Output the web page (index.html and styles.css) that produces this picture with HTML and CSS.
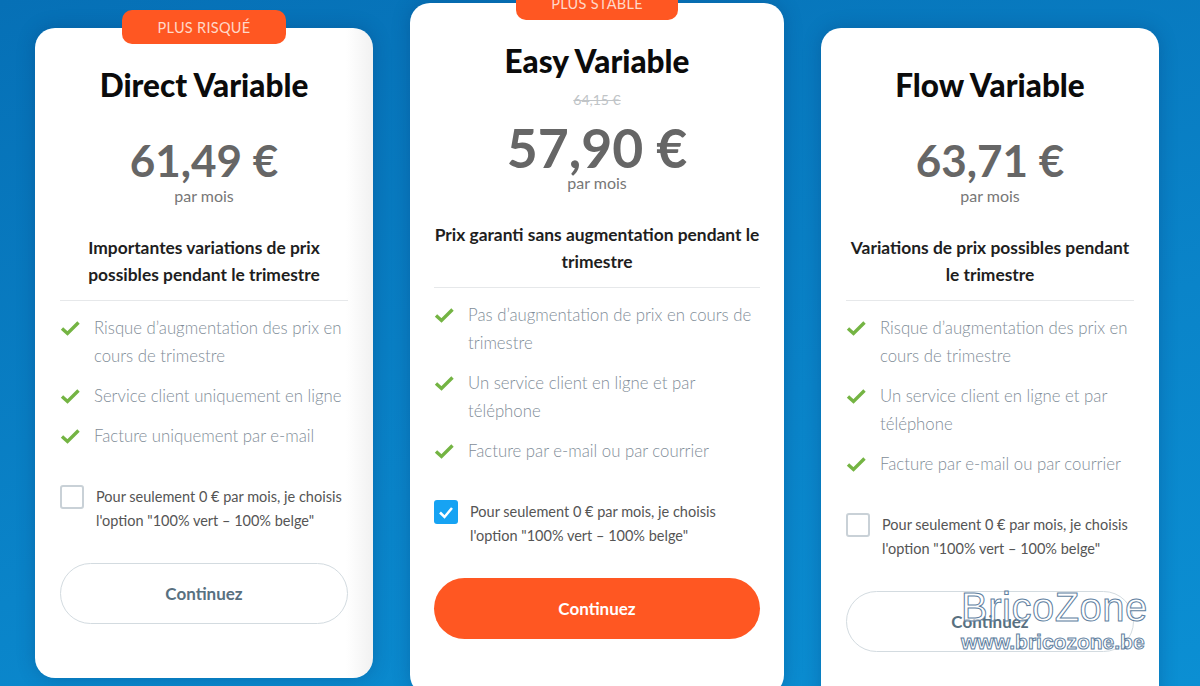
FILE: index.html
```html
<html>
<head>
    <meta charset="utf-8">
    <link rel="stylesheet" href="styles.css">
</head>
<body>
    <div class="offres">
        <!--Offre 1-->
        <div class="carte carte-courte">
            <div class="badge">PLUS RISQUÉ</div>
            <h2 class="titre">Direct Variable</h2>
            <div class="prix">61,49 €</div>
            <div class="mois">par mois</div>
            <p class="resume">Importantes variations de prix possibles pendant le trimestre</p>
            <ul class="avantages">
                <li><svg class="coche" viewBox="0 0 20 16"><path d="M2 8.5 L7.5 13.5 L18.5 2.5"/></svg><span>Risque d’augmentation des prix en cours de trimestre</span></li>
                <li><svg class="coche" viewBox="0 0 20 16"><path d="M2 8.5 L7.5 13.5 L18.5 2.5"/></svg><span>Service client uniquement en ligne</span></li>
                <li><svg class="coche" viewBox="0 0 20 16"><path d="M2 8.5 L7.5 13.5 L18.5 2.5"/></svg><span>Facture uniquement par e-mail</span></li>
            </ul>
            <label class="option">
                <span class="case"></span>
                <span>Pour seulement 0 € par mois, je choisis l'option "100% vert – 100% belge"</span>
            </label>
            <button class="bouton">Continuez</button>
        </div>

        <!--Offre 2 (mise en avant)-->
        <div class="carte carte-large">
            <div class="badge">PLUS STABLE</div>
            <h2 class="titre">Easy Variable</h2>
            <div class="ancien-prix">64,15 €</div>
            <div class="prix prix-grand">57,90 €</div>
            <div class="mois">par mois</div>
            <p class="resume">Prix garanti sans augmentation pendant le trimestre</p>
            <ul class="avantages">
                <li><svg class="coche" viewBox="0 0 20 16"><path d="M2 8.5 L7.5 13.5 L18.5 2.5"/></svg><span>Pas d’augmentation de prix en cours de trimestre</span></li>
                <li><svg class="coche" viewBox="0 0 20 16"><path d="M2 8.5 L7.5 13.5 L18.5 2.5"/></svg><span>Un service client en ligne et par téléphone</span></li>
                <li><svg class="coche" viewBox="0 0 20 16"><path d="M2 8.5 L7.5 13.5 L18.5 2.5"/></svg><span>Facture par e-mail ou par courrier</span></li>
            </ul>
            <label class="option">
                <span class="case case-cochee"><svg viewBox="0 0 24 24"><path d="M6 12.5 L10.5 17 L18 8"/></svg></span>
                <span>Pour seulement 0 € par mois, je choisis l'option "100% vert – 100% belge"</span>
            </label>
            <button class="bouton bouton-plein">Continuez</button>
        </div>

        <!--Offre 3-->
        <div class="carte">
            <h2 class="titre">Flow Variable</h2>
            <div class="prix">63,71 €</div>
            <div class="mois">par mois</div>
            <p class="resume">Variations de prix possibles pendant le trimestre</p>
            <ul class="avantages">
                <li><svg class="coche" viewBox="0 0 20 16"><path d="M2 8.5 L7.5 13.5 L18.5 2.5"/></svg><span>Risque d’augmentation des prix en cours de trimestre</span></li>
                <li><svg class="coche" viewBox="0 0 20 16"><path d="M2 8.5 L7.5 13.5 L18.5 2.5"/></svg><span>Un service client en ligne et par téléphone</span></li>
                <li><svg class="coche" viewBox="0 0 20 16"><path d="M2 8.5 L7.5 13.5 L18.5 2.5"/></svg><span>Facture par e-mail ou par courrier</span></li>
            </ul>
            <label class="option">
                <span class="case"></span>
                <span>Pour seulement 0 € par mois, je choisis l'option "100% vert – 100% belge"</span>
            </label>
            <button class="bouton">Continuez</button>
        </div>
    </div>

    <!--Filigrane-->
    <div class="filigrane">
        <div class="filigrane-nom">BricoZone</div>
        <div class="filigrane-site">www.bricozone.be</div>
    </div>
</body>
</html>
```

FILE: styles.css
```css
/*Page des offres*/
body {
    margin: 0;
    height: 686px;
    overflow: hidden;
    font-family: Lato, "Open Sans", sans-serif;
    background: linear-gradient(165deg, #0670b6 0%, #0a84c9 60%, #0b8fd3 100%);
    position: relative;
}

.offres {
    display: flex;
    align-items: flex-start;
    gap: 37px;
    padding-left: 35px;
}

.carte {
    position: relative;
    width: 338px;
    box-sizing: border-box;
    margin-top: 28px;
    padding: 39px 25px 56px 25px;
    background: white;
    border-radius: 20px;
    text-align: center;
    box-shadow: 0 0 18px rgba(0, 40, 90, 0.25);
}
.carte-courte {
    height: 650px;
    background: linear-gradient(90deg, white 92%, #f1f1f1 100%);
}
.carte-large {
    width: 374px;
    margin-top: 3px;
    padding: 40px 24px 56px 24px;
}

.badge {
    position: absolute;
    top: -18px;
    left: 50%;
    transform: translateX(-50%);
    width: 164px;
    height: 34px;
    line-height: 36px;
    border-radius: 10px;
    background-color: #ff5722;
    color: #ffd8c8;
    font-size: 14.5px;
    letter-spacing: 0.3px;
}
.carte-large .badge {
    top: -17px;
    width: 162px;
}

.titre {
    margin: 0;
    font-size: 31.5px;
    line-height: 36px;
    font-weight: 900;
    color: #0b0b0b;
}

.ancien-prix {
    margin-top: 12px;
    font-size: 14px;
    line-height: 18px;
    color: #c0c4c7;
    text-decoration: line-through;
}

.prix {
    margin-top: 32px;
    font-size: 44px;
    line-height: 50px;
    font-weight: 700;
    color: #666;
    margin-bottom: 1px;
}
.prix-grand {
    margin-top: 12px;
    font-size: 53.5px;
    line-height: 52px;
    margin-bottom: 0;
}

.mois {
    font-size: 16px;
    line-height: 20px;
    color: #777;
}

.resume {
    margin: 28px 0 0 0;
    padding-bottom: 12px;
    border-bottom: 1px solid #e6e8ea;
    font-size: 17.4px;
    line-height: 27px;
    font-weight: 700;
    color: #1e1e1e;
}

.avantages {
    list-style: none;
    margin: 13px 0 0 0;
    padding: 0;
    text-align: left;
}
.avantages li {
    display: flex;
    gap: 14px;
    margin-bottom: 12px;
    font-size: 16.75px;
    line-height: 28px;
    font-weight: 300;
    color: #7f8d98;
}
.coche {
    flex: none;
    width: 20px;
    height: 16px;
    margin-top: 6px;
}
.coche path {
    fill: none;
    stroke: #74b443;
    stroke-width: 3.4;
}

.option {
    display: flex;
    gap: 12px;
    margin-top: 35px;
    text-align: left;
    font-size: 14.5px;
    line-height: 24px;
    color: #555;
}
.case {
    flex: none;
    width: 24px;
    height: 24px;
    box-sizing: border-box;
    border: 2px solid #c9d1d7;
    border-radius: 3px;
}
.case-cochee {
    border: none;
    background-color: #16a3f3;
}
.case-cochee svg {
    width: 24px;
    height: 24px;
}
.case-cochee path {
    fill: none;
    stroke: white;
    stroke-width: 2.5;
}

.bouton {
    display: block;
    width: 100%;
    height: 61px;
    margin-top: 30px;
    border: 1px solid #d3dbe0;
    border-radius: 31px;
    background: white;
    font-family: Lato, sans-serif;
    font-size: 17px;
    font-weight: 700;
    color: #587080;
}
.bouton-plein {
    border: none;
    background-color: #ff5722;
    color: white;
}

.filigrane {
    position: absolute;
    left: 961px;
    top: 585px;
    font-family: "Liberation Sans", Arial, sans-serif;
    color: rgba(255, 255, 255, 0.6);
    -webkit-text-stroke: 1px #5f7f9f;
}
.filigrane-nom {
    font-size: 40px;
    line-height: 44px;
    letter-spacing: 0.5px;
}
.filigrane-site {
    font-size: 21px;
    line-height: 26px;
    font-weight: 700;
}
```
